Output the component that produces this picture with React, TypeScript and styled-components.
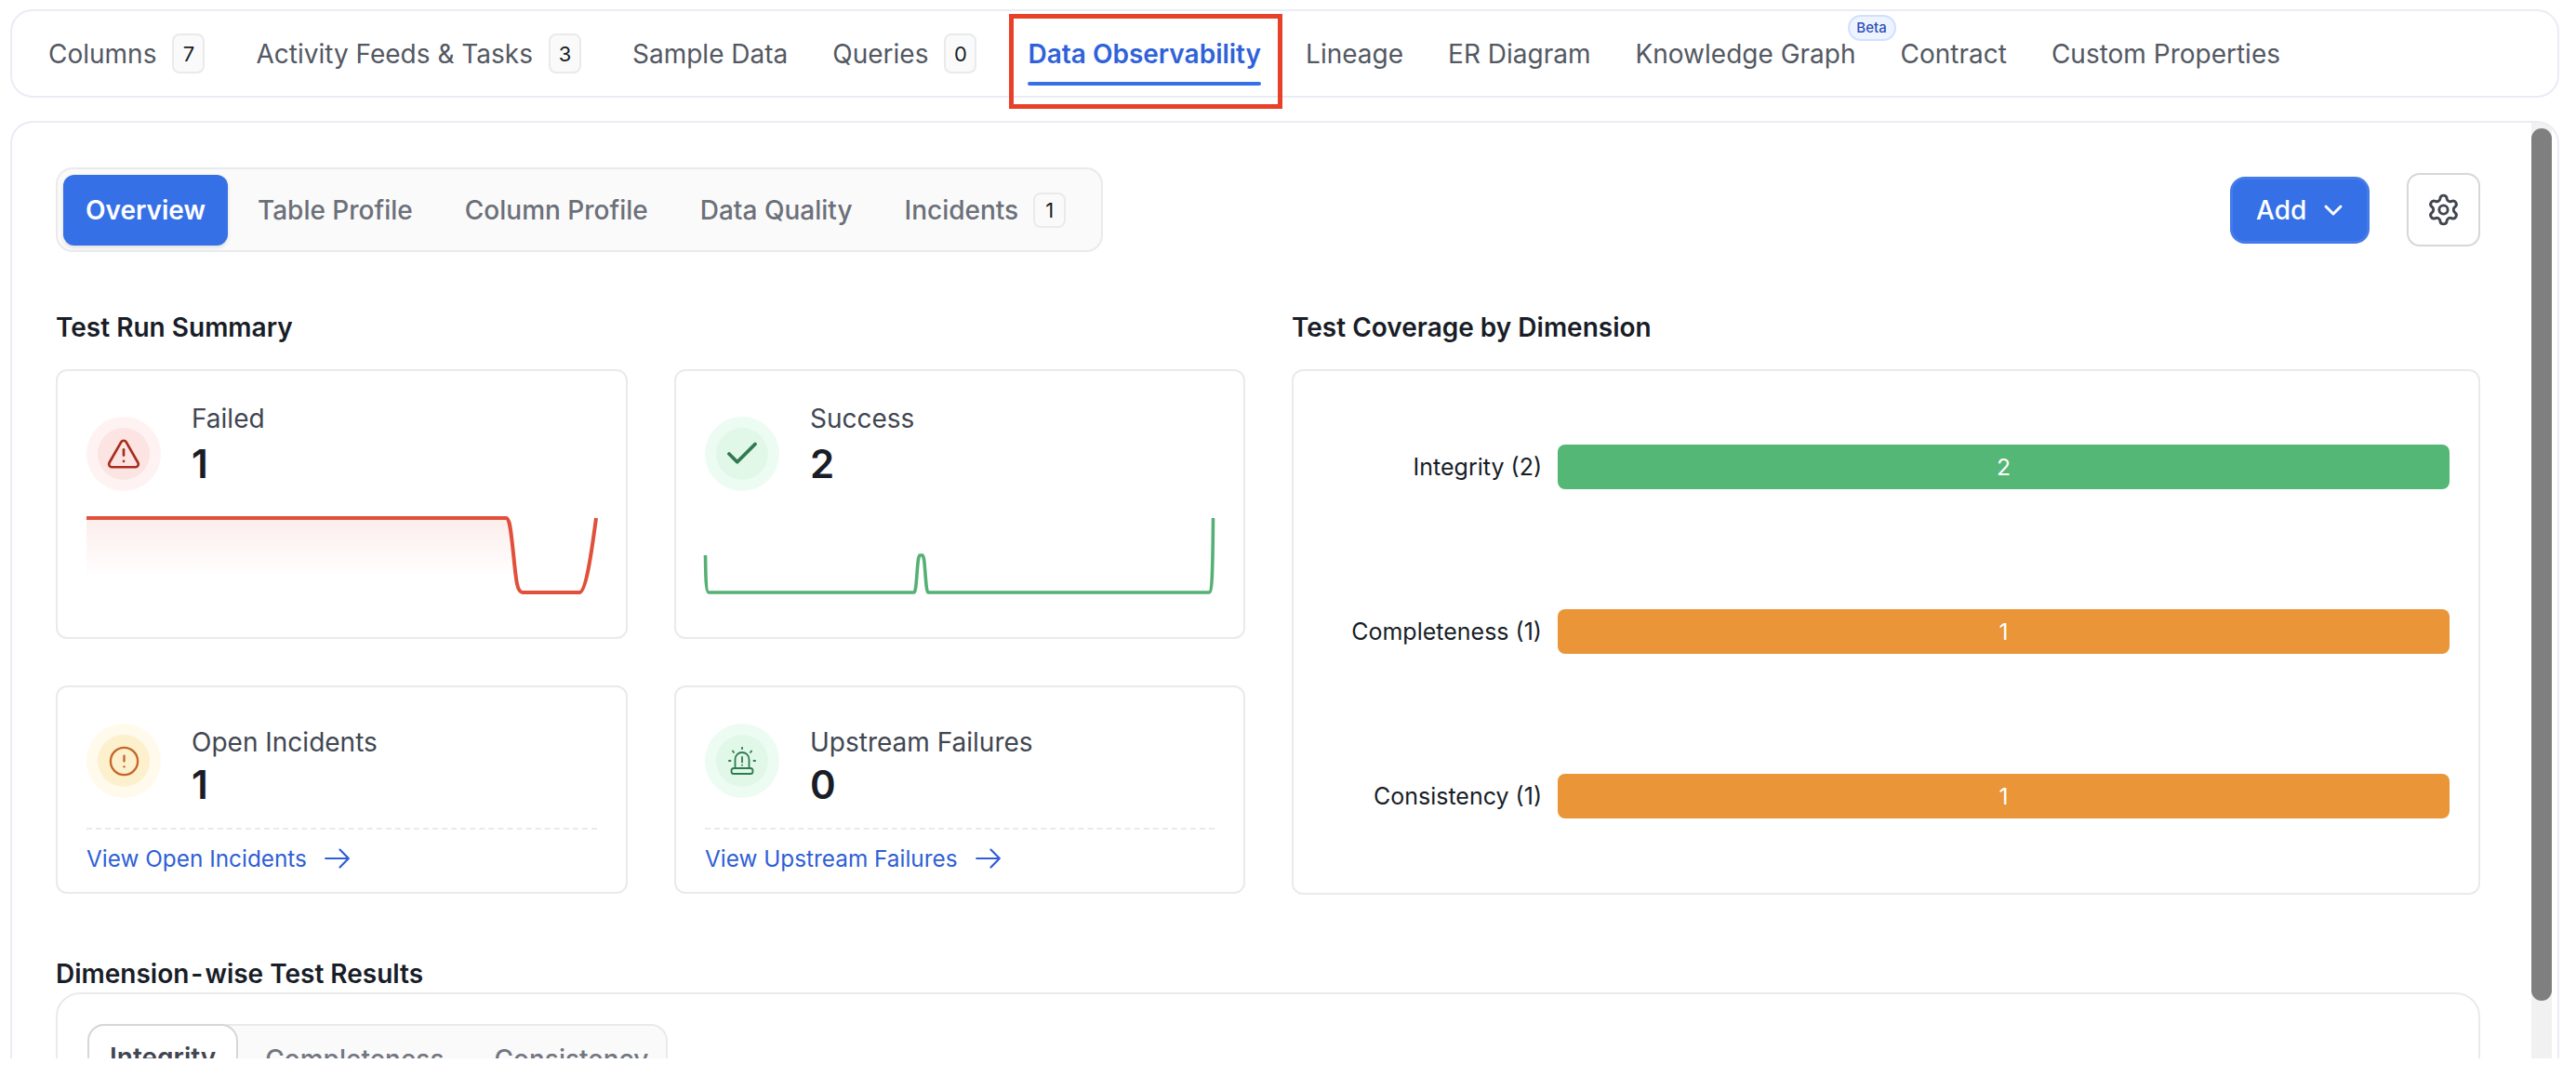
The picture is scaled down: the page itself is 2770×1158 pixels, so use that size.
import React from "react";
import styled, { createGlobalStyle } from "styled-components";
import { Check, ChevronDown, CircleAlert, Settings, TriangleAlert } from "lucide-react";

const Global = createGlobalStyle`
  * { box-sizing: border-box; }
  html, body { margin: 0; padding: 0; background: #fff; height: 100%; }
  body { font-family: Inter, "Liberation Sans", sans-serif; overflow: hidden; }
`;

const Page = styled.div`
  width: 2770px;
  height: 1158px;
  padding: 10px 18px 20px 11px;
  display: flex;
  flex-direction: column;
  gap: 25px;
  overflow: hidden;
`;

const TopBar = styled.nav`
  height: 95px;
  flex: none;
  display: flex;
  align-items: center;
  padding: 0 39px;
  gap: 48px;
  border: 2px solid #eaecf5;
  border-radius: 24px;
`;

const TopTab = styled.div<{ $active?: boolean }>`
  position: relative;
  display: flex;
  align-items: center;
  gap: 17px;
  font-size: 28px;
  line-height: 34px;
  font-weight: ${(p) => (p.$active ? 600 : 400)};
  color: ${(p) => (p.$active ? "#2f62d9" : "#535862")};
  white-space: nowrap;
  ${(p) =>
    p.$active &&
    `&::after {
      content: "";
      position: absolute;
      left: 0;
      right: 0;
      bottom: -17px;
      height: 4px;
      background: #3570e6;
      border-radius: 2px;
    }`}
`;

const CountBadge = styled.span<{ $top?: boolean }>`
  display: flex;
  align-items: center;
  justify-content: center;
  width: 35px;
  height: ${(p) => (p.$top ? 43 : 38)}px;
  margin-right: ${(p) => (p.$top ? 7 : 0)}px;
  font-size: 22px;
  font-weight: 400;
  color: #181d27;
  background: #fafafa;
  border: 2px solid #e9eaeb;
  border-radius: 8px;
`;

const BetaBadge = styled.span`
  position: absolute;
  right: -43px;
  top: -25px;
  width: 52px;
  height: 28px;
  display: flex;
  align-items: center;
  justify-content: center;
  font-size: 15px;
  font-weight: 500;
  color: #2a4fb8;
  background: #eef4ff;
  border: 2px solid #d1e0ff;
  border-radius: 14px;
`;

const Annotation = styled.span`
  position: absolute;
  left: -20px;
  right: -23px;
  top: -26px;
  bottom: -42px;
  border: 5px solid #e8412a;
  pointer-events: none;
`;

const Panel = styled.main`
  position: relative;
  flex: 1;
  min-height: 0;
  overflow: hidden;
  padding: 48px 83px 0 47px;
  border: 2px solid #eaecf5;
  border-bottom: none;
  border-radius: 24px 24px 0 0;
`;

const ScrollTrack = styled.div`
  position: absolute;
  top: 0;
  bottom: 0;
  right: 6px;
  width: 22px;
  background: #f1f1f1;
`;

const ScrollThumb = styled.div`
  position: absolute;
  left: 0;
  right: 0;
  top: 6px;
  height: 938px;
  background: #7f7f7f;
  border-radius: 11px;
`;

const HeaderRow = styled.div`
  display: flex;
  align-items: center;
  justify-content: space-between;
`;

const SubTabs = styled.div`
  display: flex;
  align-items: center;
  gap: 8px;
  height: 91px;
  padding: 6px 14px 5px 6px;
  background: #fafafa;
  border: 2px solid #e9eaeb;
  border-radius: 18px;
`;

const SubTab = styled.div<{ $active?: boolean }>`
  display: flex;
  align-items: center;
  gap: 16px;
  height: 76px;
  padding: 0 24px;
  font-size: 28px;
  font-weight: ${(p) => (p.$active ? 600 : 500)};
  color: ${(p) => (p.$active ? "#fff" : "#6b7079")};
  background: ${(p) => (p.$active ? "#3570e6" : "transparent")};
  border-radius: 12px;
  box-shadow: ${(p) => (p.$active ? "0 2px 4px rgba(10,13,18,.12)" : "none")};
  white-space: nowrap;
`;

const Actions = styled.div`
  display: flex;
  align-items: center;
  gap: 40px;
`;

const AddButton = styled.button`
  display: flex;
  align-items: center;
  gap: 13px;
  width: 150px;
  height: 72px;
  padding: 0 0 0 28px;
  font-family: inherit;
  font-size: 28px;
  font-weight: 500;
  color: #fff;
  background: #3570e6;
  border: none;
  border-radius: 16px;
  box-shadow: inset 0 0 0 3px rgba(255, 255, 255, 0.08);
`;

const IconButton = styled.button`
  display: flex;
  align-items: center;
  justify-content: center;
  width: 79px;
  height: 79px;
  padding: 0;
  color: #414651;
  background: #fff;
  border: 2px solid #d5d7da;
  border-radius: 14px;
`;

const Columns = styled.div`
  display: grid;
  grid-template-columns: 1fr 1fr;
  column-gap: 50px;
  margin-top: 64px;
`;

const Column = styled.section`
  display: flex;
  flex-direction: column;
  gap: 28px;
`;

const Heading = styled.h2`
  margin: 0;
  font-size: 28px;
  line-height: 34px;
  font-weight: 600;
  color: #181d27;
`;

const Hyphen = styled.span`
  margin: 0 2px;
`;

const StatGrid = styled.div`
  display: grid;
  grid-template-columns: 615px 1fr;
  grid-template-rows: 290px 224px;
  gap: 50px;
`;

const Card = styled.article<{ $top: number }>`
  padding: ${(p) => p.$top}px 31px 0;
  background: #fff;
  border: 2px solid #e9eaeb;
  border-radius: 12px;
`;

const StatRow = styled.div`
  display: flex;
  align-items: flex-start;
  gap: 33px;
`;

const Halo = styled.div<{ $outer: string; $offset: number }>`
  flex: none;
  display: flex;
  align-items: center;
  justify-content: center;
  width: 80px;
  height: 80px;
  margin-top: ${(p) => p.$offset}px;
  background: ${(p) => p.$outer};
  border-radius: 50%;
`;

const HaloInner = styled.div<{ $inner: string; $color: string }>`
  display: flex;
  align-items: center;
  justify-content: center;
  width: 56px;
  height: 56px;
  color: ${(p) => p.$color};
  background: ${(p) => p.$inner};
  border-radius: 50%;
`;

const StatText = styled.div<{ $offset: number; $gap: number }>`
  display: flex;
  flex-direction: column;
  gap: ${(p) => p.$gap}px;
  margin-top: ${(p) => p.$offset}px;
`;

const StatLabel = styled.div`
  font-size: 28px;
  line-height: 34px;
  color: #414651;
`;

const StatValue = styled.div`
  font-size: 42px;
  line-height: 50px;
  font-weight: 600;
  color: #181d27;
`;

const Spark = styled.svg`
  display: block;
  margin-top: 27px;
  overflow: visible;
`;

const CardFooter = styled.div`
  margin-top: 21px;
  padding-top: 14px;
  border-top: 2px dashed #e9eaeb;
`;

const ViewLink = styled.a`
  display: inline-flex;
  align-items: center;
  gap: 19px;
  font-size: 24.35px;
  line-height: 34px;
  color: #2f5fd6;
`;

const ChartCard = styled.div`
  height: 565px;
  display: flex;
  flex-direction: column;
  justify-content: center;
  gap: 129px;
  padding: 0 31px 2px 0;
  background: #fff;
  border: 2px solid #e9eaeb;
  border-radius: 12px;
`;

const BarRow = styled.div`
  display: flex;
  align-items: center;
  gap: 17px;
`;

const BarLabel = styled.div`
  flex: none;
  width: 267px;
  text-align: right;
  font-size: 25px;
  color: #181d27;
`;

const Bar = styled.div<{ $color: string }>`
  flex: 1;
  height: 48px;
  display: flex;
  align-items: center;
  justify-content: center;
  padding-top: 1px;
  font-size: 24.7px;
  color: #fff;
  background: ${(p) => p.$color};
  border-radius: 8px;
`;

const DimensionSection = styled.section`
  margin-top: 68px;
`;

const DimensionPanel = styled.div`
  margin-top: 3px;
  height: 400px;
  padding: 32px;
  background: #fff;
  border: 2px solid #e9eaeb;
  border-radius: 26px;
`;

const DimTabs = styled.div`
  display: flex;
  align-items: flex-start;
  width: 624px;
  height: 76px;
  background: #fafafa;
  border: 2px solid #e9eaeb;
  border-radius: 18px;
`;

const DimTab = styled.div<{ $active?: boolean }>`
  flex: none;
  height: 72px;
  margin: ${(p) => (p.$active ? "-2px 2px 0 -2px" : "0")};
  padding: 0 ${(p) => (p.$active ? 22 : 27)}px;
  display: flex;
  align-items: center;
  font-size: 28px;
  font-weight: ${(p) => (p.$active ? 600 : 500)};
  color: ${(p) => (p.$active ? "#414651" : "#717680")};
  background: ${(p) => (p.$active ? "#fff" : "transparent")};
  border: ${(p) => (p.$active ? "2px solid #d5d7da" : "none")};
  border-radius: 18px;
`;

const SirenIcon = () => (
  <svg width="30" height="30" viewBox="0 0 30 30" fill="none" stroke="currentColor" strokeWidth="1.8" strokeLinecap="round" strokeLinejoin="round">
    <rect x="3.5" y="23" width="23" height="6" rx="2.6" />
    <path d="M7.5 23v-9.5a7.5 7.5 0 0 1 15 0V23" />
    <path d="M15 11v5.5M15 19.6v.2" />
    <path d="M15 .8v1.4M5 4.5l1 1.5M25 4.5l-1 1.5M.9 15h1.6M27.5 15h1.6" />
  </svg>
);

const LongArrow = () => (
  <svg width="27" height="22" viewBox="0 0 27 22" fill="none" stroke="currentColor" strokeWidth="2.2" strokeLinecap="round" strokeLinejoin="round">
    <path d="M1.2 11H25.8M16.5 1.6 25.8 11l-9.3 9.4" />
  </svg>
);

const FailedSpark = () => (
  <Spark width="548" height="84" viewBox="0 0 548 84" fill="none">
    <defs>
      <linearGradient id="failFill" x1="0" y1="0" x2="0" y2="1">
        <stop offset="0" stopColor="#e0503a" stopOpacity="0.1" />
        <stop offset="1" stopColor="#e0503a" stopOpacity="0" />
      </linearGradient>
    </defs>
    <path d="M0 2H451C455 2 456 12 459 40C460 50 461 58 461 66H0Z" fill="url(#failFill)" />
    <path d="M0 2H451C455 2 456 12 459 40C462 70 463 82 469 82H530C537 82 543 40 548 2" stroke="#e0503a" strokeWidth="4" />
  </Spark>
);

const SuccessSpark = () => (
  <Spark width="548" height="84" viewBox="0 0 548 84" fill="none">
    <path d="M0.5 42C0.8 62 1 82 4 82H225C228 82 228 42 231 42H234C237 42 237 82 240 82H542C545.5 82 546 60 546.5 2" stroke="#55b075" strokeWidth="3.6" />
  </Spark>
);

export default function App() {
  return (
    <Page>
      <Global />
      <TopBar>
        <TopTab>Columns<CountBadge $top>7</CountBadge></TopTab>
        <TopTab>Activity Feeds &amp; Tasks<CountBadge $top>3</CountBadge></TopTab>
        <TopTab>Sample Data</TopTab>
        <TopTab>Queries<CountBadge $top>0</CountBadge></TopTab>
        <TopTab $active>Data Observability<Annotation /></TopTab>
        <TopTab>Lineage</TopTab>
        <TopTab>ER Diagram</TopTab>
        <TopTab>Knowledge Graph<BetaBadge>Beta</BetaBadge></TopTab>
        <TopTab>Contract</TopTab>
        <TopTab>Custom Properties</TopTab>
      </TopBar>

      <Panel>
        <HeaderRow>
          <SubTabs>
            <SubTab $active>Overview</SubTab>
            <SubTab>Table Profile</SubTab>
            <SubTab>Column Profile</SubTab>
            <SubTab>Data Quality</SubTab>
            <SubTab>Incidents<CountBadge>1</CountBadge></SubTab>
          </SubTabs>
          <Actions>
            <AddButton>Add<ChevronDown size={32} strokeWidth={2.2} /></AddButton>
            <IconButton><Settings size={37} strokeWidth={1.9} /></IconButton>
          </Actions>
        </HeaderRow>

        <Columns>
          <Column>
            <Heading>Test Run Summary</Heading>
            <StatGrid>
              <Card $top={34}>
                <StatRow>
                  <Halo $outer="#fef3f2" $offset={15}>
                    <HaloInner $inner="#fbe4e1" $color="#a92e1f"><TriangleAlert size={38} strokeWidth={1.7} /></HaloInner>
                  </Halo>
                  <StatText $offset={0} $gap={7}>
                    <StatLabel>Failed</StatLabel>
                    <StatValue>1</StatValue>
                  </StatText>
                </StatRow>
                <FailedSpark />
              </Card>
              <Card $top={34}>
                <StatRow>
                  <Halo $outer="#edfcf2" $offset={15}>
                    <HaloInner $inner="#e1f8e9" $color="#2f7a4f"><Check size={42} strokeWidth={2.2} /></HaloInner>
                  </Halo>
                  <StatText $offset={0} $gap={7}>
                    <StatLabel>Success</StatLabel>
                    <StatValue>2</StatValue>
                  </StatText>
                </StatRow>
                <SuccessSpark />
              </Card>
              <Card $top={39}>
                <StatRow>
                  <Halo $outer="#fffaeb" $offset={0}>
                    <HaloInner $inner="#fdf0cd" $color="#c4672a"><CircleAlert size={35} strokeWidth={1.6} /></HaloInner>
                  </Halo>
                  <StatText $offset={3} $gap={4}>
                    <StatLabel>Open Incidents</StatLabel>
                    <StatValue>1</StatValue>
                  </StatText>
                </StatRow>
                <CardFooter>
                  <ViewLink>View Open Incidents<LongArrow /></ViewLink>
                </CardFooter>
              </Card>
              <Card $top={39}>
                <StatRow>
                  <Halo $outer="#edfcf2" $offset={0}>
                    <HaloInner $inner="#e1f8e9" $color="#2f7a4f"><SirenIcon /></HaloInner>
                  </Halo>
                  <StatText $offset={3} $gap={4}>
                    <StatLabel>Upstream Failures</StatLabel>
                    <StatValue>0</StatValue>
                  </StatText>
                </StatRow>
                <CardFooter>
                  <ViewLink>View Upstream Failures<LongArrow /></ViewLink>
                </CardFooter>
              </Card>
            </StatGrid>
          </Column>

          <Column>
            <Heading>Test Coverage by Dimension</Heading>
            <ChartCard>
              <BarRow><BarLabel>Integrity (2)</BarLabel><Bar $color="#55b776">2</Bar></BarRow>
              <BarRow><BarLabel>Completeness (1)</BarLabel><Bar $color="#e99538">1</Bar></BarRow>
              <BarRow><BarLabel>Consistency (1)</BarLabel><Bar $color="#e99538">1</Bar></BarRow>
            </ChartCard>
          </Column>
        </Columns>

        <DimensionSection>
          <Heading>Dimension<Hyphen>-</Hyphen>wise Test Results</Heading>
          <DimensionPanel>
            <DimTabs>
              <DimTab $active>Integrity</DimTab>
              <DimTab>Completeness</DimTab>
              <DimTab>Consistency</DimTab>
            </DimTabs>
          </DimensionPanel>
        </DimensionSection>

        <ScrollTrack><ScrollThumb /></ScrollTrack>
      </Panel>
    </Page>
  );
}
